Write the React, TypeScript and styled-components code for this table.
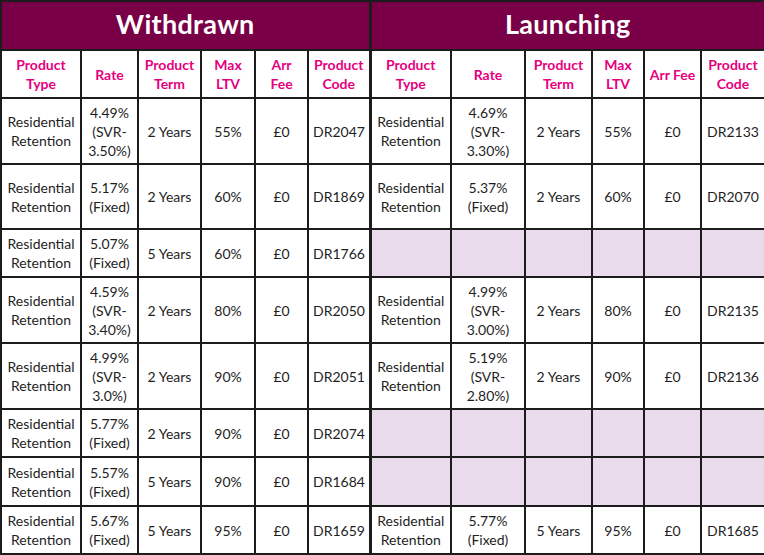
import React from "react";
import styled, { createGlobalStyle } from "styled-components";

const Global = createGlobalStyle`
  html, body { margin: 0; padding: 0; background: #ffffff; }
  body { font-family: Lato, "Noto Sans", sans-serif; }
`;

const Table = styled.table`
  width: 764px;
  table-layout: fixed;
  border-collapse: collapse;
  font-family: Lato, "Noto Sans", sans-serif;
`;

const TitleCell = styled.th<{ $first?: boolean }>`
  background: #790047;
  color: #ffffff;
  font-size: 27px;
  font-weight: 700;
  letter-spacing: 0.3px;
  height: 44px;
  line-height: 30px;
  padding: 0 0 3px;
  box-sizing: border-box;
  text-align: center;
  border: 2px solid #1c1c1c;
  border-left-width: ${(p) => (p.$first ? "2px" : "3px")};
`;

const HeadCell = styled.th<{ $divider?: boolean }>`
  color: #e6007e;
  font-size: 14px;
  font-weight: 700;
  line-height: 19px;
  height: 46px;
  padding: 0 4px;
  text-align: center;
  vertical-align: middle;
  border: 2px solid #1c1c1c;
  border-left-width: ${(p) => (p.$divider ? "3px" : "2px")};
`;

const Cell = styled.td<{ $divider?: boolean; $empty?: boolean }>`
  color: #1e1e1e;
  font-size: 14px;
  line-height: 19px;
  padding: 0 4px;
  text-align: center;
  vertical-align: middle;
  background: ${(p) => (p.$empty ? "#e9dbeb" : "#ffffff")};
  border: 2px solid #1c1c1c;
  border-left-width: ${(p) => (p.$divider ? "3px" : "2px")};
`;

const Row = styled.tr<{ $h: number }>`
  height: ${(p) => p.$h}px;
`;

const widths = [80, 57, 63, 54, 53, 62, 81, 74, 67, 52, 57, 64];

type P = [string, string, string, string, string, string];

const heads: P = ["Product Type", "Rate", "Product Term", "Max LTV", "Arr Fee", "Product Code"];

const withdrawn: P[] = [
  ["Residential Retention", "4.49% (SVR-3.50%)", "2 Years", "55%", "£0", "DR2047"],
  ["Residential Retention", "5.17% (Fixed)", "2 Years", "60%", "£0", "DR1869"],
  ["Residential Retention", "5.07% (Fixed)", "5 Years", "60%", "£0", "DR1766"],
  ["Residential Retention", "4.59% (SVR-3.40%)", "2 Years", "80%", "£0", "DR2050"],
  ["Residential Retention", "4.99% (SVR-3.0%)", "2 Years", "90%", "£0", "DR2051"],
  ["Residential Retention", "5.77% (Fixed)", "2 Years", "90%", "£0", "DR2074"],
  ["Residential Retention", "5.57% (Fixed)", "5 Years", "90%", "£0", "DR1684"],
  ["Residential Retention", "5.67% (Fixed)", "5 Years", "95%", "£0", "DR1659"],
];

const launching: (P | null)[] = [
  ["Residential Retention", "4.69% (SVR-3.30%)", "2 Years", "55%", "£0", "DR2133"],
  ["Residential Retention", "5.37% (Fixed)", "2 Years", "60%", "£0", "DR2070"],
  null,
  ["Residential Retention", "4.99% (SVR-3.00%)", "2 Years", "80%", "£0", "DR2135"],
  ["Residential Retention", "5.19% (SVR-2.80%)", "2 Years", "90%", "£0", "DR2136"],
  null,
  null,
  ["Residential Retention", "5.77% (Fixed)", "5 Years", "95%", "£0", "DR1685"],
];

const heights = [66, 65, 48, 66, 66, 48, 49, 48];

export default function App() {
  return (
    <>
      <Global />
      <Table>
        <colgroup>
          {widths.map((w, i) => (
            <col key={i} style={{ width: w }} />
          ))}
        </colgroup>
        <thead>
          <Row $h={49}>
            <TitleCell colSpan={6} $first>Withdrawn</TitleCell>
            <TitleCell colSpan={6}>Launching</TitleCell>
          </Row>
          <Row $h={48}>
            {heads.map((h, i) => (
              <HeadCell key={"a" + i}>{h}</HeadCell>
            ))}
            {heads.map((h, i) => (
              <HeadCell key={"b" + i} $divider={i === 0}>{h}</HeadCell>
            ))}
          </Row>
        </thead>
        <tbody>
          {withdrawn.map((w, r) => {
            const l = launching[r];
            return (
              <Row key={r} $h={heights[r]}>
                {w.map((v, i) => (
                  <Cell key={"a" + i}>{v}</Cell>
                ))}
                {l
                  ? l.map((v, i) => (
                      <Cell key={"b" + i} $divider={i === 0}>{v}</Cell>
                    ))
                  : heads.map((_, i) => (
                      <Cell key={"b" + i} $divider={i === 0} $empty />
                    ))}
              </Row>
            );
          })}
        </tbody>
      </Table>
    </>
  );
}
